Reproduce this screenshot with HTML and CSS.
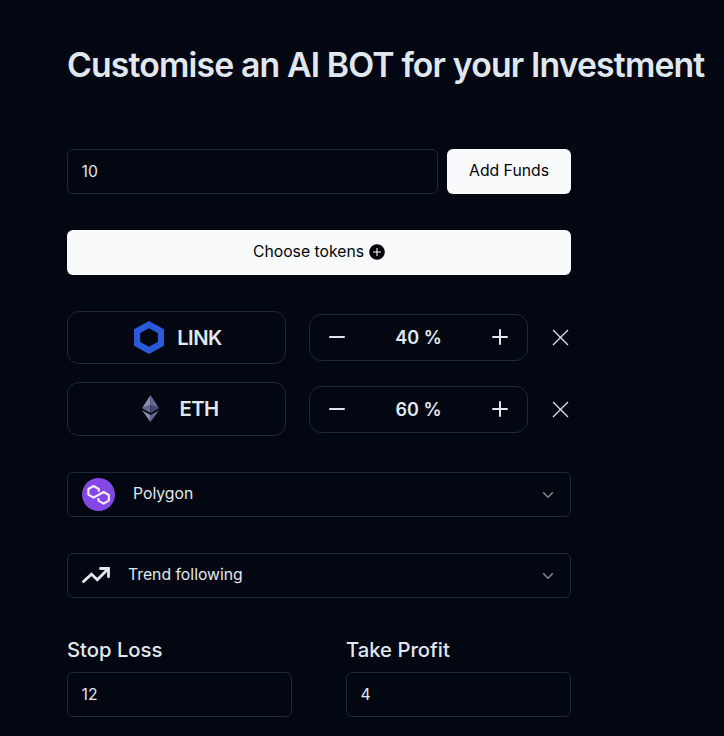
FILE: index.html
```html
<!DOCTYPE html>
<html lang="en">
<head>
<meta charset="utf-8">
<title>Customise an AI BOT</title>
<link rel="stylesheet" href="styles.css">
</head>
<body>
<main class="page">
  <h1 class="title">Customise an AI BOT for your Investment</h1>
  <form class="form">
    <div class="funds">
      <input class="field" type="text" value="10" aria-label="Amount">
      <button class="button" type="button">Add Funds</button>
    </div>
    <button class="button wide" type="button"><span>Choose tokens</span>
      <svg class="plus-badge" viewBox="0 0 16 16"><circle cx="8" cy="8" r="7.8" fill="#020409"/><path d="M8 4v8M4 8h8" stroke="#f8fafc" stroke-width="1.1"/></svg>
    </button>
    <div class="tokens">
      <div class="row">
        <div class="token">
          <svg class="link-icon" viewBox="0 0 30 33"><path fill="#2a5ada" fill-rule="evenodd" d="M15 0 30 8.3V24.7L15 33 0 24.7V8.3ZM15 7.2 6.2 12v9L15 25.8 23.8 21v-9Z"/></svg>
          <span>LINK</span>
        </div>
        <div class="stepper">
          <svg class="sign" viewBox="0 0 16 16"><path d="M1 8h14"/></svg>
          <span>40 %</span>
          <svg class="sign" viewBox="0 0 16 16"><path d="M1 8h14M8 1v14"/></svg>
        </div>
        <svg class="close" viewBox="0 0 17 17"><path d="m1 1 15 15M16 1 1 16"/></svg>
      </div>
      <div class="row tall">
        <div class="token eth">
          <svg class="eth-icon" viewBox="0 0 17 27"><path fill="#8a92b2" d="M8.5 0 0 13.2 8.5 10z"/><path fill="#62688f" d="m8.5 0 8.5 13.2L8.5 10z"/><path fill="#62688f" d="m0 13.2 8.5-3.5v8.2z"/><path fill="#454a75" d="m17 13.2-8.5-3.5v8.2z"/><path fill="#8a92b2" d="m0 15.2 8.5 4.9V27z"/><path fill="#62688f" d="m17 15.2-8.5 4.9V27z"/></svg>
          <span>ETH</span>
        </div>
        <div class="stepper">
          <svg class="sign" viewBox="0 0 16 16"><path d="M1 8h14"/></svg>
          <span>60 %</span>
          <svg class="sign" viewBox="0 0 16 16"><path d="M1 8h14M8 1v14"/></svg>
        </div>
        <svg class="close" viewBox="0 0 17 17"><path d="m1 1 15 15M16 1 1 16"/></svg>
      </div>
    </div>
    <div class="select">
      <svg class="polygon-icon" viewBox="0 0 33 33"><circle cx="16.5" cy="16.5" r="16.5" fill="#8247e5"/><path fill="none" stroke="#f5eaff" stroke-width="2.2" stroke-linejoin="round" d="M16.8 13.6v-2.6L11.6 8 6.4 11v5.6l5.2 3 10-5.6 5.2 3v5.6l-5.2 3-5.2-3v-2.6"/></svg>
      <span>Polygon</span>
      <svg class="chevron" viewBox="0 0 12 8"><path d="m1.2 1.4 4.8 4.8 4.8-4.8"/></svg>
    </div>
    <div class="select trend">
      <svg class="trend-icon" viewBox="0 0 28 17"><path d="m1.5 14.5 8-7.4 5.8 5.6L26 2M18.5 1.5h8v8.2"/></svg>
      <span>Trend following</span>
      <svg class="chevron" viewBox="0 0 12 8"><path d="m1.2 1.4 4.8 4.8 4.8-4.8"/></svg>
    </div>
    <div class="limits">
      <label class="limit">Stop Loss<input class="field" type="text" value="12"></label>
      <label class="limit">Take Profit<input class="field" type="text" value="4"></label>
    </div>
  </form>
</main>
</body>
</html>
```
FILE: styles.css
```css
* { box-sizing: border-box; }
body {
  margin: 0;
  background: #030711;
  color: #e1e7ef;
  font-family: Inter, sans-serif;
  font-size: 15.75px;
}
.page { height: 736px; padding: 44px 0 0 67px; overflow: hidden; }
.title {
  margin: 0 0 64px;
  font-size: 33.75px;
  line-height: 41px;
  font-weight: 600;
  letter-spacing: -.025em;
  white-space: nowrap;
}
.form { width: 504px; display: flex; flex-direction: column; gap: 36px; }
.funds { display: flex; gap: 9px; }
.field {
  display: block;
  width: 100%;
  min-width: 0;
  height: 45px;
  padding: 0 13.5px;
  border: 1px solid #1d283a;
  border-radius: 6px;
  background: transparent;
  color: inherit;
  font: 400 15.75px Inter, sans-serif;
}
.button {
  display: flex;
  align-items: center;
  justify-content: center;
  flex: none;
  width: 124px;
  height: 45px;
  padding: 0 0 2px;
  border: 0;
  border-radius: 6px;
  background: #f8fafc;
  color: #020409;
  font: 400 15.75px Inter, sans-serif;
}
.wide { width: 100%; gap: 5px; }
.plus-badge { width: 16px; height: 16px; }
.tokens { display: flex; flex-direction: column; gap: 18px; height: 125px; }
.row { display: grid; grid-template-columns: 219px 219px 17px; column-gap: 23px; align-items: center; height: 53px; }
.tall { height: 54px; }
.token {
  display: flex;
  align-items: center;
  justify-content: center;
  gap: 13px;
  height: 100%;
  padding-left: 3px;
  border: 1px solid #1d283a;
  border-radius: 12px;
  font-size: 20.25px;
  font-weight: 600;
  letter-spacing: -.025em;
}
.eth { gap: 20px; padding: 0 0 1px 8px; }
.link-icon { width: 30px; height: 33px; }
.eth-icon { width: 17px; height: 27px; }
.stepper {
  display: flex;
  align-items: center;
  justify-content: space-between;
  height: 47px;
  padding: 0 19px;
  border: 1px solid #1d283a;
  border-radius: 12px;
  font-size: 18px;
  font-weight: 600;
}
.row .stepper { align-self: start; margin-top: 3px; }
.tall .stepper { margin-top: 4px; }
.sign { width: 16px; height: 16px; margin-bottom: 1px; stroke: #e1e7ef; stroke-width: 2; fill: none; stroke-linecap: round; }
.close { align-self: start; width: 17px; height: 17px; margin: 18px 0 0 1px; stroke: #e1e7ef; stroke-width: 1.2; fill: none; }
.tall .close { margin-top: 19px; }
.select {
  display: flex;
  align-items: center;
  height: 45px;
  padding: 0 16px 0 14px;
  border: 1px solid #1d283a;
  border-radius: 6px;
}
.select span { margin-left: 18px; padding-bottom: 2px; }
.polygon-icon { width: 33px; height: 33px; }
.trend-icon { width: 28px; height: 17px; fill: none; stroke: #e1e7ef; stroke-width: 2.8; stroke-linecap: round; stroke-linejoin: miter; }
.chevron { width: 12px; height: 8px; margin-left: auto; fill: none; stroke: #7d8188; stroke-width: 1.6; }
.limits { display: grid; grid-template-columns: 225px 225px; column-gap: 54px; }
.limit { font-size: 20.25px; line-height: 32px; font-weight: 500; }
.limit .field { margin-top: 6px; }
```
